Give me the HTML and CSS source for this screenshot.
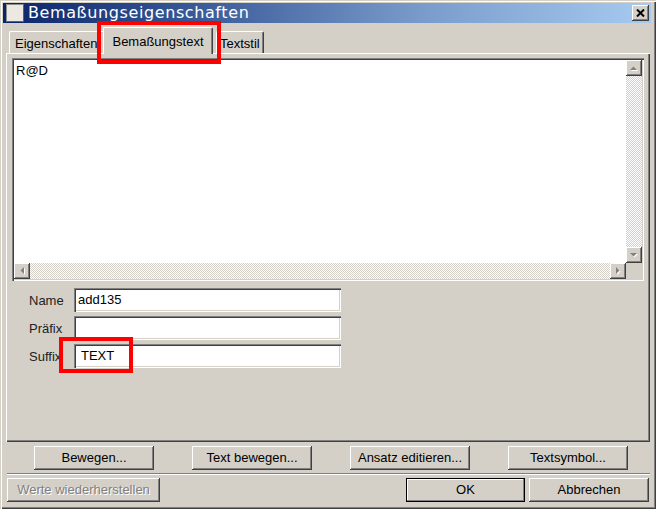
FILE: index.html
```html
<!DOCTYPE html>
<html>
<head>
<meta charset="utf-8">
<link rel="stylesheet" href="styles.css">
</head>
<body>
<div class="window">
  <div class="titlebar">
    <span class="ticon"></span>
    <span class="ttext">Bemaßungseigenschaften</span>
    <span class="close"><svg width="9" height="8" viewBox="0 0 9 8"><path d="M1 0.5 L8 7.5 M8 0.5 L1 7.5" stroke="#000" stroke-width="2" fill="none"/></svg></span>
  </div>
  <div class="tabs">
    <div class="tab t1">Eigenschaften</div>
    <div class="tab sel t2">Bemaßungstext</div>
    <div class="tab t3">Textstil</div>
  </div>
  <div class="panel">
    <div class="textarea">
      <div class="ta-content">R@D</div>
      <div class="vscroll">
        <div class="sbtn"><svg width="8" height="5" viewBox="0 0 8 5"><polygon points="1,5 8,5 4.5,1.5" fill="#fff"/><polygon points="0,4 7,4 3.5,0.5" fill="#808080"/></svg></div>
        <div class="track"></div>
        <div class="sbtn"><svg width="8" height="5" viewBox="0 0 8 5"><polygon points="1,1 8,1 4.5,4.5" fill="#fff"/><polygon points="0,0 7,0 3.5,3.5" fill="#808080"/></svg></div>
      </div>
      <div class="hscroll">
        <div class="sbtn"><svg width="5" height="8" viewBox="0 0 5 8"><polygon points="5,1 5,8 1.5,4.5" fill="#fff"/><polygon points="4,0 4,7 0.5,3.5" fill="#808080"/></svg></div>
        <div class="track"></div>
        <div class="sbtn"><svg width="5" height="8" viewBox="0 0 5 8"><polygon points="1,1 1,8 4.5,4.5" fill="#fff"/><polygon points="0,0 0,7 3.5,3.5" fill="#808080"/></svg></div>
      </div>
      <div class="corner"></div>
    </div>
    <div class="form">
      <div class="row"><span class="label">Name</span><div class="input">add135</div></div>
      <div class="row"><span class="label">Präfix</span><div class="input"></div></div>
      <div class="row"><span class="label">Suffix</span><div class="input"><span class="lead">TEXT</span></div></div>
    </div>
  </div>
  <div class="btnrow">
    <div class="btn w120">Bewegen...</div>
    <div class="btn w120">Text bewegen...</div>
    <div class="btn w120">Ansatz editieren...</div>
    <div class="btn w120">Textsymbol...</div>
  </div>
  <div class="sep"></div>
  <div class="bottomrow">
    <div class="btn disabled restore">Werte wiederherstellen</div>
    <div class="spacer"></div>
    <div class="btn default ok">OK</div>
    <div class="btn cancel">Abbrechen</div>
  </div>
  <div class="mark m1"></div>
  <div class="mark m2"></div>
</div>
</body>
</html>
```

FILE: styles.css
```css
html, body {
  margin: 0;
  padding: 0;
  background: #d4d0c8;
}
.window {
  position: relative;
  width: 656px;
  height: 509px;
  box-sizing: border-box;
  padding: 3px 5px 0 3px;
  background: #d4d0c8;
  box-shadow: inset 1px 1px #d4d0c8, inset 2px 2px #fff, inset -1px -1px #404040, inset -2px -2px #808080;
  font-family: "Liberation Sans", Arial, sans-serif;
  font-size: 13px;
  color: #000;
  overflow: hidden;
}
.titlebar {
  height: 20px;
  display: flex;
  align-items: center;
  background: linear-gradient(90deg, #0a246a 0%, #3a5a98 30%, #7a9ccc 65%, #a6caf0 100%);
}
.ticon {
  width: 16px;
  height: 16px;
  margin-left: 3px;
  background: #ece9e2;
  border-left: 1px solid #8c8c8c;
  border-top: 1px solid #8c8c8c;
  border-right: 1px solid #b04040;
  border-bottom: 1px solid #b04040;
  flex: none;
}
.ttext {
  margin-left: 4px;
  font-family: "DejaVu Sans", Verdana, sans-serif;
  font-size: 16px;
  letter-spacing: 0.6px;
  line-height: 20px;
  color: #fff;
}
.close {
  margin-left: auto;
  margin-right: 2px;
  width: 17px;
  height: 16px;
  background: #d4d0c8;
  box-shadow: inset -1px -1px #404040, inset 1px 1px #fff, inset -2px -2px #808080;
  display: flex;
  align-items: center;
  justify-content: center;
}
.close svg { margin-top: -1px; margin-left: -1px; }
.tabs {
  margin-top: 4px;
  height: 27px;
  display: flex;
  align-items: flex-end;
  position: relative;
  z-index: 2;
}
.tab {
  box-sizing: border-box;
  height: 22px;
  margin-bottom: 1px;
  padding-top: 4px;
  line-height: 16px;
  background: #d4d0c8;
  border-left: 1px solid #fff;
  border-top: 1px solid #fff;
  border-right: 1px solid #404040;
  border-radius: 2px 2px 0 0;
  box-shadow: inset -1px 0 #808080;
  white-space: nowrap;
  overflow: hidden;
}
.t1 { margin-left: 6px; width: 96px; padding-left: 5px; }
.t2 {
  margin-left: -2px;
  width: 110px;
  height: 27px;
  margin-bottom: 0;
  padding-top: 6px;
  text-align: center;
  position: relative;
  z-index: 3;
}
.t3 { margin-left: 3px; width: 48px; padding-left: 3px; }
.panel {
  position: relative;
  z-index: 1;
  margin-top: -1px;
  margin-left: 3px;
  width: 644px;
  height: 389px;
  box-sizing: border-box;
  padding: 5px 6px;
  box-shadow: inset 1px 1px #fff, inset -1px -1px #404040, inset -2px -2px #808080;
}
.textarea {
  width: 632px;
  height: 223px;
  box-sizing: border-box;
  padding: 2px;
  background: #fff;
  box-shadow: inset 1px 1px #808080, inset 2px 2px #404040, inset -1px -1px #fff, inset -2px -2px #d4d0c8;
  display: grid;
  grid-template-columns: 1fr 16px;
  grid-template-rows: 1fr 16px;
}
.ta-content {
  padding: 3px 2px;
  line-height: 16px;
}
.vscroll, .hscroll {
  display: flex;
}
.vscroll { flex-direction: column; }
.track {
  flex: 1;
  background-color: #fff;
  background-image: repeating-conic-gradient(#d4d0c8 0 25%, #fff 0 50%);
  background-size: 2px 2px;
}
.sbtn {
  width: 16px;
  height: 16px;
  flex: none;
  background: #d4d0c8;
  box-shadow: inset -1px -1px #404040, inset 1px 1px #fff, inset -2px -2px #808080;
  display: flex;
  align-items: center;
  justify-content: center;
}
.corner { background: #d4d0c8; }
.form {
  margin-top: 7px;
  display: flex;
  flex-direction: column;
  gap: 4px;
}
.row {
  display: flex;
  align-items: center;
  height: 24px;
}
.label {
  width: 45px;
  margin-left: 17px;
  color: #222;
}
.input {
  width: 267px;
  height: 24px;
  box-sizing: border-box;
  padding: 2px 4px;
  line-height: 20px;
  background: #fff;
  box-shadow: inset 1px 1px #808080, inset 2px 2px #404040, inset -1px -1px #fff, inset -2px -2px #d4d0c8;
}
.lead { margin-left: 3px; }
.btnrow {
  margin-top: 4px;
  padding-left: 31px;
  display: flex;
  gap: 38px;
}
.btn {
  height: 24px;
  box-sizing: border-box;
  line-height: 24px;
  text-align: center;
  background: #d4d0c8;
  box-shadow: inset -1px -1px #404040, inset 1px 1px #fff, inset -2px -2px #808080;
  white-space: nowrap;
}
.w120 { width: 120px; }
.sep {
  margin-top: 3px;
  margin-left: 4px;
  width: 643px;
  height: 1px;
  background: #808080;
  border-bottom: 1px solid #fff;
}
.bottomrow {
  margin-top: 3px;
  display: flex;
  margin-left: 4px;
  margin-right: 2px;
}
.restore { width: 153px; }
.disabled {
  color: #808080;
  text-shadow: 1px 1px #fff;
}
.spacer { flex: 1; }
.ok { width: 119px; margin-right: 4px; }
.default {
  border: 1px solid #000;
  line-height: 22px;
  box-shadow: inset -1px -1px #808080, inset 1px 1px #fff;
}
.cancel { width: 120px; }
.mark {
  position: absolute;
  box-sizing: border-box;
  border: 4px solid #ff0000;
  z-index: 10;
}
.m1 { left: 97px; top: 21px; width: 124px; height: 43px; }
.m2 { left: 59px; top: 337px; width: 74px; height: 36px; }
```
